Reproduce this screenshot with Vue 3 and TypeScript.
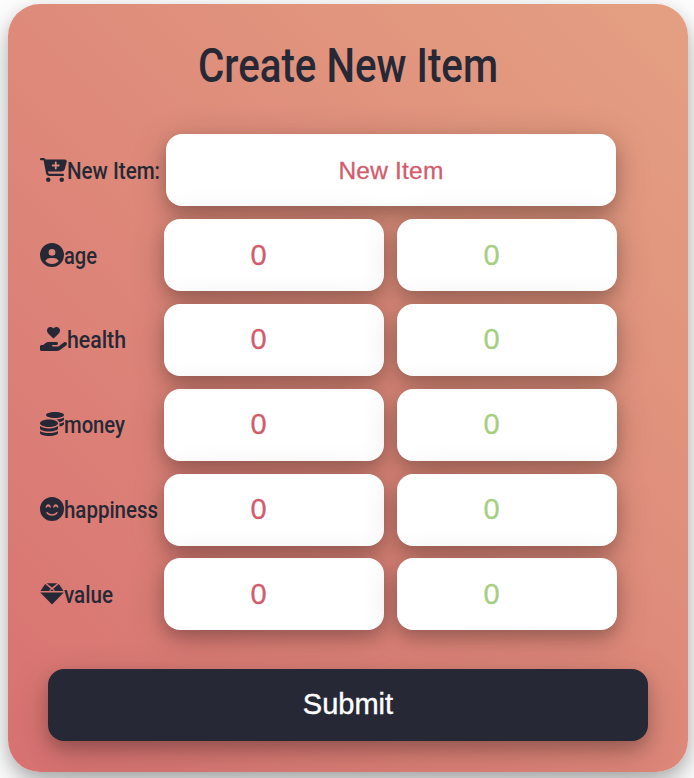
<script setup lang="ts">
import { ref } from 'vue'

interface Icon {
  box: string
  width: number
  paths: string[]
}

interface Row {
  label: string
  textWidth: number
  icon: Icon
}

const cart: Icon = {
  box: '0 0 576 512',
  width: 27,
  paths: [
    'M0 24C0 10.7 10.7 0 24 0H69.5c22 0 41.5 12.8 50.6 32h411c26.3 0 45.5 25 38.6 50.4l-41 152.3c-8.5 31.4-37 53.3-69.5 53.3H170.7l5.4 28.5c2.2 11.3 12.1 19.5 23.6 19.5H488c13.3 0 24 10.7 24 24s-10.7 24-24 24H199.7c-34.6 0-64.3-24.6-70.7-58.5L77.4 54.5c-.7-3.8-4-6.5-7.9-6.5H24C10.7 48 0 37.3 0 24zM128 464a48 48 0 1 1 96 0 48 48 0 1 1 -96 0zm336-48a48 48 0 1 1 0 96 48 48 0 1 1 0-96zM252 160c0 11 9 20 20 20h44v44c0 11 9 20 20 20s20-9 20-20V180h44c11 0 20-9 20-20s-9-20-20-20H356V96c0-11-9-20-20-20s-20 9-20 20v44H272c-11 0-20 9-20 20z',
  ],
}

const rows: Row[] = [
  {
    label: 'age',
    textWidth: 33,
    icon: {
      box: '0 0 512 512',
      width: 24,
      paths: [
        'M399 384.2C376.9 345.8 335.4 320 288 320H224c-47.4 0-88.9 25.8-111 64.2c35.2 39.2 86.2 63.8 143 63.8s107.8-24.7 143-63.8zM0 256a256 256 0 1 1 512 0A256 256 0 1 1 0 256zm256 16a72 72 0 1 0 0-144 72 72 0 1 0 0 144z',
      ],
    },
  },
  {
    label: 'health',
    textWidth: 59,
    icon: {
      box: '0 0 576 512',
      width: 27,
      paths: [
        'M148 76.6C148 34.3 182.3 0 224.6 0c20.3 0 39.8 8.1 54.1 22.4l9.3 9.3 9.3-9.3C311.6 8.1 331.1 0 351.4 0C393.7 0 428 34.3 428 76.6c0 20.3-8.1 39.8-22.4 54.1L302.1 234.1c-7.8 7.8-20.5 7.8-28.3 0L170.4 130.7C156.1 116.4 148 96.9 148 76.6zM568.2 336.3c13.1 17.8 9.3 42.8-8.5 55.9L433.1 485.5c-23.4 17.2-51.6 26.5-80.7 26.5H32c-17.7 0-32-14.3-32-32V416c0-17.7 14.3-32 32-32H68.8l44.9-36c22.7-18.2 50.9-28 80-28H352c17.7 0 32 14.3 32 32s-14.3 32-32 32H272c-8.8 0-16 7.2-16 16s7.2 16 16 16H392.6l119.7-88.2c17.8-13.1 42.8-9.3 55.9 8.5z',
      ],
    },
  },
  {
    label: 'money',
    textWidth: 61,
    icon: {
      box: '0 0 512 512',
      width: 24,
      paths: [
        'M0 405.3V448c0 35.3 86 64 192 64s192-28.7 192-64v-42.7C342.7 434.4 267.2 448 192 448S41.3 434.4 0 405.3zM320 128c106 0 192-28.7 192-64S426 0 320 0 128 28.7 128 64s86 64 192 64zM0 300.4V352c0 35.3 86 64 192 64s192-28.7 192-64v-51.6c-41.3 34-116.9 51.6-192 51.6S41.3 334.4 0 300.4zm416 11c57.3-11.1 96-31.7 96-55.4v-42.7c-23.2 16.4-57.3 27.6-96 34.5v63.6zM192 160C86 160 0 195.8 0 240s86 80 192 80 192-35.8 192-80-86-80-192-80zm219.3 56.3c60-10.8 100.7-32 100.7-56.3v-42.7c-35.5 25.1-96.5 38.6-160.7 41.8 29.5 14.3 51.2 33.5 60 57.2z',
      ],
    },
  },
  {
    label: 'happiness',
    textWidth: 94,
    icon: {
      box: '0 0 512 512',
      width: 24,
      paths: [
        'M256 512A256 256 0 1 0 256 0a256 256 0 1 0 0 512zM164.1 325.5C182 346.2 212.6 368 256 368s74-21.8 91.9-42.5c5.8-6.7 15.9-7.4 22.6-1.6s7.4 15.9 1.6 22.6C349.8 372.1 311.1 400 256 400s-93.8-27.9-116.1-53.5c-5.8-6.7-5.1-16.8 1.6-22.6s16.8-5.1 22.6 1.6zM217.6 228.8c-8-11-25-28.8-41.6-28.8s-33.6 17.8-41.6 28.8c-2.1 2.8-5.7 3.9-8.9 2.8s-5.5-4.1-5.5-7.6c0-17.9 6.7-35.6 16.6-48.8c9.8-13 23.9-23.2 39.4-23.2s29.6 10.2 39.4 23.2c9.9 13.2 16.6 30.9 16.6 48.8c0 3.4-2.2 6.5-5.5 7.6s-6.9 0-8.9-2.8zM377.6 228.8c-8-11-25-28.8-41.6-28.8s-33.6 17.8-41.6 28.8c-2.1 2.8-5.7 3.9-8.9 2.8s-5.5-4.1-5.5-7.6c0-17.9 6.7-35.6 16.6-48.8c9.8-13 23.9-23.2 39.4-23.2s29.6 10.2 39.4 23.2c9.9 13.2 16.6 30.9 16.6 48.8c0 3.4-2.2 6.5-5.5 7.6s-6.9 0-8.9-2.8z',
      ],
    },
  },
  {
    label: 'value',
    textWidth: 49,
    icon: {
      box: '0 0 24 24',
      width: 24,
      paths: ['M6.6 1.2H17.4L12 5.6z', 'M5.2 2L10.8 6.8 9 9H.4z', 'M18.8 2L13.2 6.8 15 9H23.6z', 'M12 7.2L13.8 9H10.2z', 'M.2 10.4H23.8L12 22.4z'],
    },
  },
]

const itemName = ref('New Item')
</script>

<template>
  <main class="page">
    <form class="card" @submit.prevent>
      <h1 class="title">
        <svg width="320" height="60">
          <text x="10" y="46" textLength="300" lengthAdjust="spacingAndGlyphs">Create New Item</text>
        </svg>
      </h1>

      <div class="fields">
        <div class="row">
          <label class="label">
            <svg :width="cart.width" height="24" :viewBox="cart.box">
              <path v-for="d in cart.paths" :key="d" :d="d" />
            </svg>
            <svg class="word" width="94" height="32">
              <text x="0" y="25" textLength="93" lengthAdjust="spacingAndGlyphs">New Item:</text>
            </svg>
          </label>
          <div class="field name">{{ itemName }}</div>
        </div>

        <div v-for="row in rows" :key="row.label" class="row">
          <label class="label">
            <svg :width="row.icon.width" height="24" :viewBox="row.icon.box">
              <path v-for="d in row.icon.paths" :key="d" :d="d" />
            </svg>
            <svg class="word" :width="row.textWidth + 1" height="32">
              <text x="0" y="25" :textLength="row.textWidth" lengthAdjust="spacingAndGlyphs">{{ row.label }}</text>
            </svg>
          </label>
          <div class="field number cost">0</div>
          <div class="field number gain">0</div>
        </div>
      </div>

      <button class="submit" type="submit">Submit</button>
    </form>
  </main>
</template>

<style>
body {
  background: #fff;
}
</style>

<style scoped>
.page {
  box-sizing: border-box;
  height: 778px;
  padding: 4px 6px 6px 8px;
  overflow: hidden;
}

.card {
  box-sizing: border-box;
  width: 680px;
  height: 768px;
  padding: 32px 32px 0;
  border-radius: 32px;
  background: linear-gradient(45deg, #d87272, #e4a082);
  box-shadow: 0 8px 16px rgba(0, 0, 0, 0.2), 0 12px 40px rgba(0, 0, 0, 0.19);
  color: #262935;
  font-family: Roboto, "Liberation Sans", sans-serif;
}

.title {
  display: flex;
  justify-content: center;
  margin: 0 0 38.2px;
}

.title svg {
  overflow: visible;
  font-size: 49px;
  font-weight: 500;
  fill: currentColor;
}

.fields {
  display: grid;
  gap: 12.85px;
}

.row {
  display: flex;
  height: 72px;
}

.label {
  box-sizing: border-box;
  display: flex;
  align-items: center;
  flex: none;
  width: 124px;
  padding-bottom: 0.9px;
  fill: currentColor;
}

.label svg {
  flex: none;
}

.label .word {
  overflow: visible;
  font-size: 24px;
  font-weight: 500;
}

.field {
  box-sizing: border-box;
  display: flex;
  align-items: center;
  justify-content: center;
  height: 72px;
  border-radius: 16px;
  background: #fff;
  box-shadow: 0 8px 16px rgba(0, 0, 0, 0.2), 0 6px 36px rgba(0, 0, 0, 0.19);
  font-family: "Liberation Sans", Arial, sans-serif;
  -webkit-text-stroke: 0.3px currentColor;
}

.name {
  width: 450px;
  margin-left: 2px;
  padding-top: 2px;
  color: #d25c6c;
  font-size: 24.5px;
  letter-spacing: 0.2px;
}

.number {
  width: 220px;
  padding-right: 31px;
  font-size: 29px;
}

.cost {
  margin-right: 13px;
  color: #d25c6c;
}

.gain {
  color: #a5cf80;
}

.submit {
  display: block;
  width: 600px;
  height: 72px;
  margin: 38.5px 0 0 8px;
  padding: 0;
  border: 0;
  border-radius: 16px;
  background: #262935;
  box-shadow: 0 8px 16px rgba(0, 0, 0, 0.2), 0 12px 40px rgba(0, 0, 0, 0.19);
  color: #fff;
  font-family: "Liberation Sans", Arial, sans-serif;
  font-size: 29px;
  -webkit-text-stroke: 0.4px currentColor;
}
</style>
